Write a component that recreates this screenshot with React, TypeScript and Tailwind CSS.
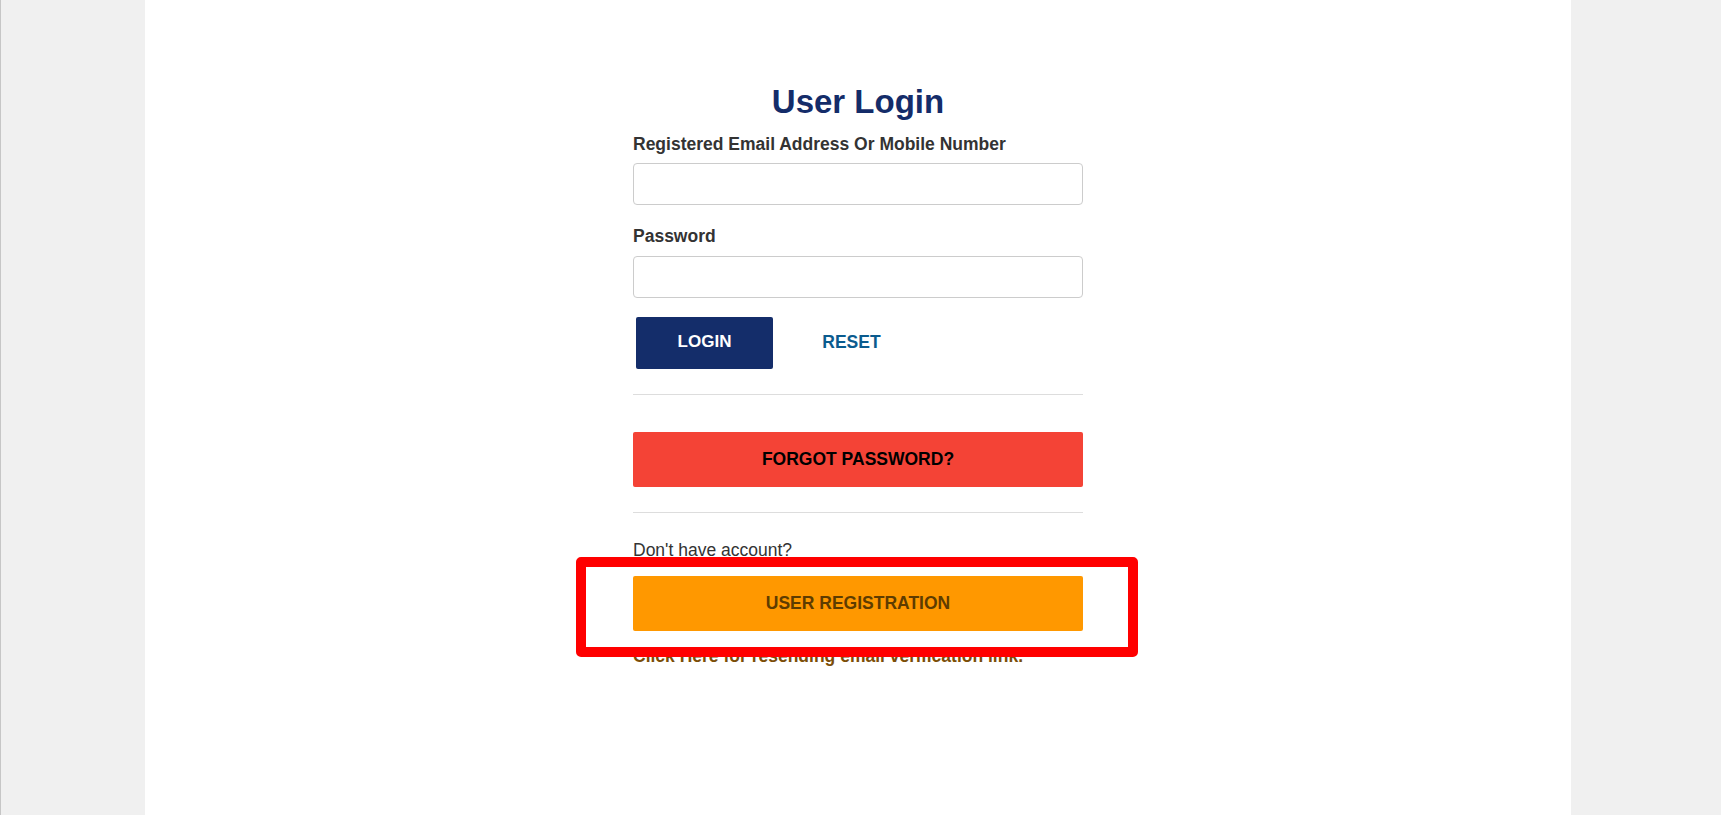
export default function App() {
  return (
    <div className="flex h-[815px] w-full overflow-hidden bg-[#f0f0f0] font-['Liberation_Sans',Arial,sans-serif]">
      <div className="h-full w-[145px] shrink-0 border-l border-[#c6c6c6] bg-[#f0f0f0]" />

      <main className="h-full w-[1426px] shrink-0 bg-white pt-[83px]">
        <div className="mx-auto w-[450px]">
          <h1 className="text-center text-[33px] font-bold leading-[38px] text-[#142c69]">User Login</h1>

          <label className="mt-[13px] block">
            <span className="block text-[17.5px] font-bold leading-[20px] text-[#333333]">
              Registered Email Address Or Mobile Number
            </span>
            <input
              type="text"
              className="mt-[9px] block h-[42px] w-full rounded-[4px] border border-[#cccccc] bg-white px-3 outline-none"
            />
          </label>

          <label className="mt-[21px] block">
            <span className="block text-[17.5px] font-bold leading-[20px] text-[#333333]">Password</span>
            <input
              type="password"
              className="mt-[10px] block h-[42px] w-full rounded-[4px] border border-[#cccccc] bg-white px-3 outline-none"
            />
          </label>

          <div className="mt-[19px] flex items-center">
            <button
              type="button"
              className="ml-[3px] h-[52px] w-[137px] rounded-[2px] pb-[2px] bg-[#142d6a] text-[17px] font-bold text-white"
            >
              LOGIN
            </button>
            <button type="button" className="ml-[10px] h-[52px] w-[137px] pb-[2px] text-[17.5px] font-bold text-[#0a5b8e]">
              RESET
            </button>
          </div>

          <hr className="mt-[25px] border-0 border-t border-[#dddddd]" />

          <button
            type="button"
            className="mt-[37px] block h-[55px] w-full rounded-[2px] bg-[#f44336] text-[17.5px] font-bold text-black"
          >
            FORGOT PASSWORD?
          </button>

          <hr className="mt-[25px] border-0 border-t border-[#dddddd]" />

          <p className="mt-[27px] text-[17.5px] leading-[20px] text-[#333333]">Don't have account?</p>

          <div className="relative mt-[16px]">
            <button
              type="button"
              className="block h-[55px] w-full rounded-[2px] bg-[#ff9800] text-[17.5px] font-bold text-[#5e3c00]"
            >
              USER REGISTRATION
            </button>
            <p className="mt-[15px] text-[17.5px] font-bold leading-[20px] text-[#7b4e08]">
              Click Here for resending email verification link.
            </p>
            <div className="pointer-events-none absolute -left-[57px] -right-[55px] -top-[19px] h-[100px] rounded-[5px] border-[10px] border-[#ff0000]" />
          </div>
        </div>
      </main>

      <div className="h-full flex-1 bg-[#f0f0f0]" />
    </div>
  );
}
